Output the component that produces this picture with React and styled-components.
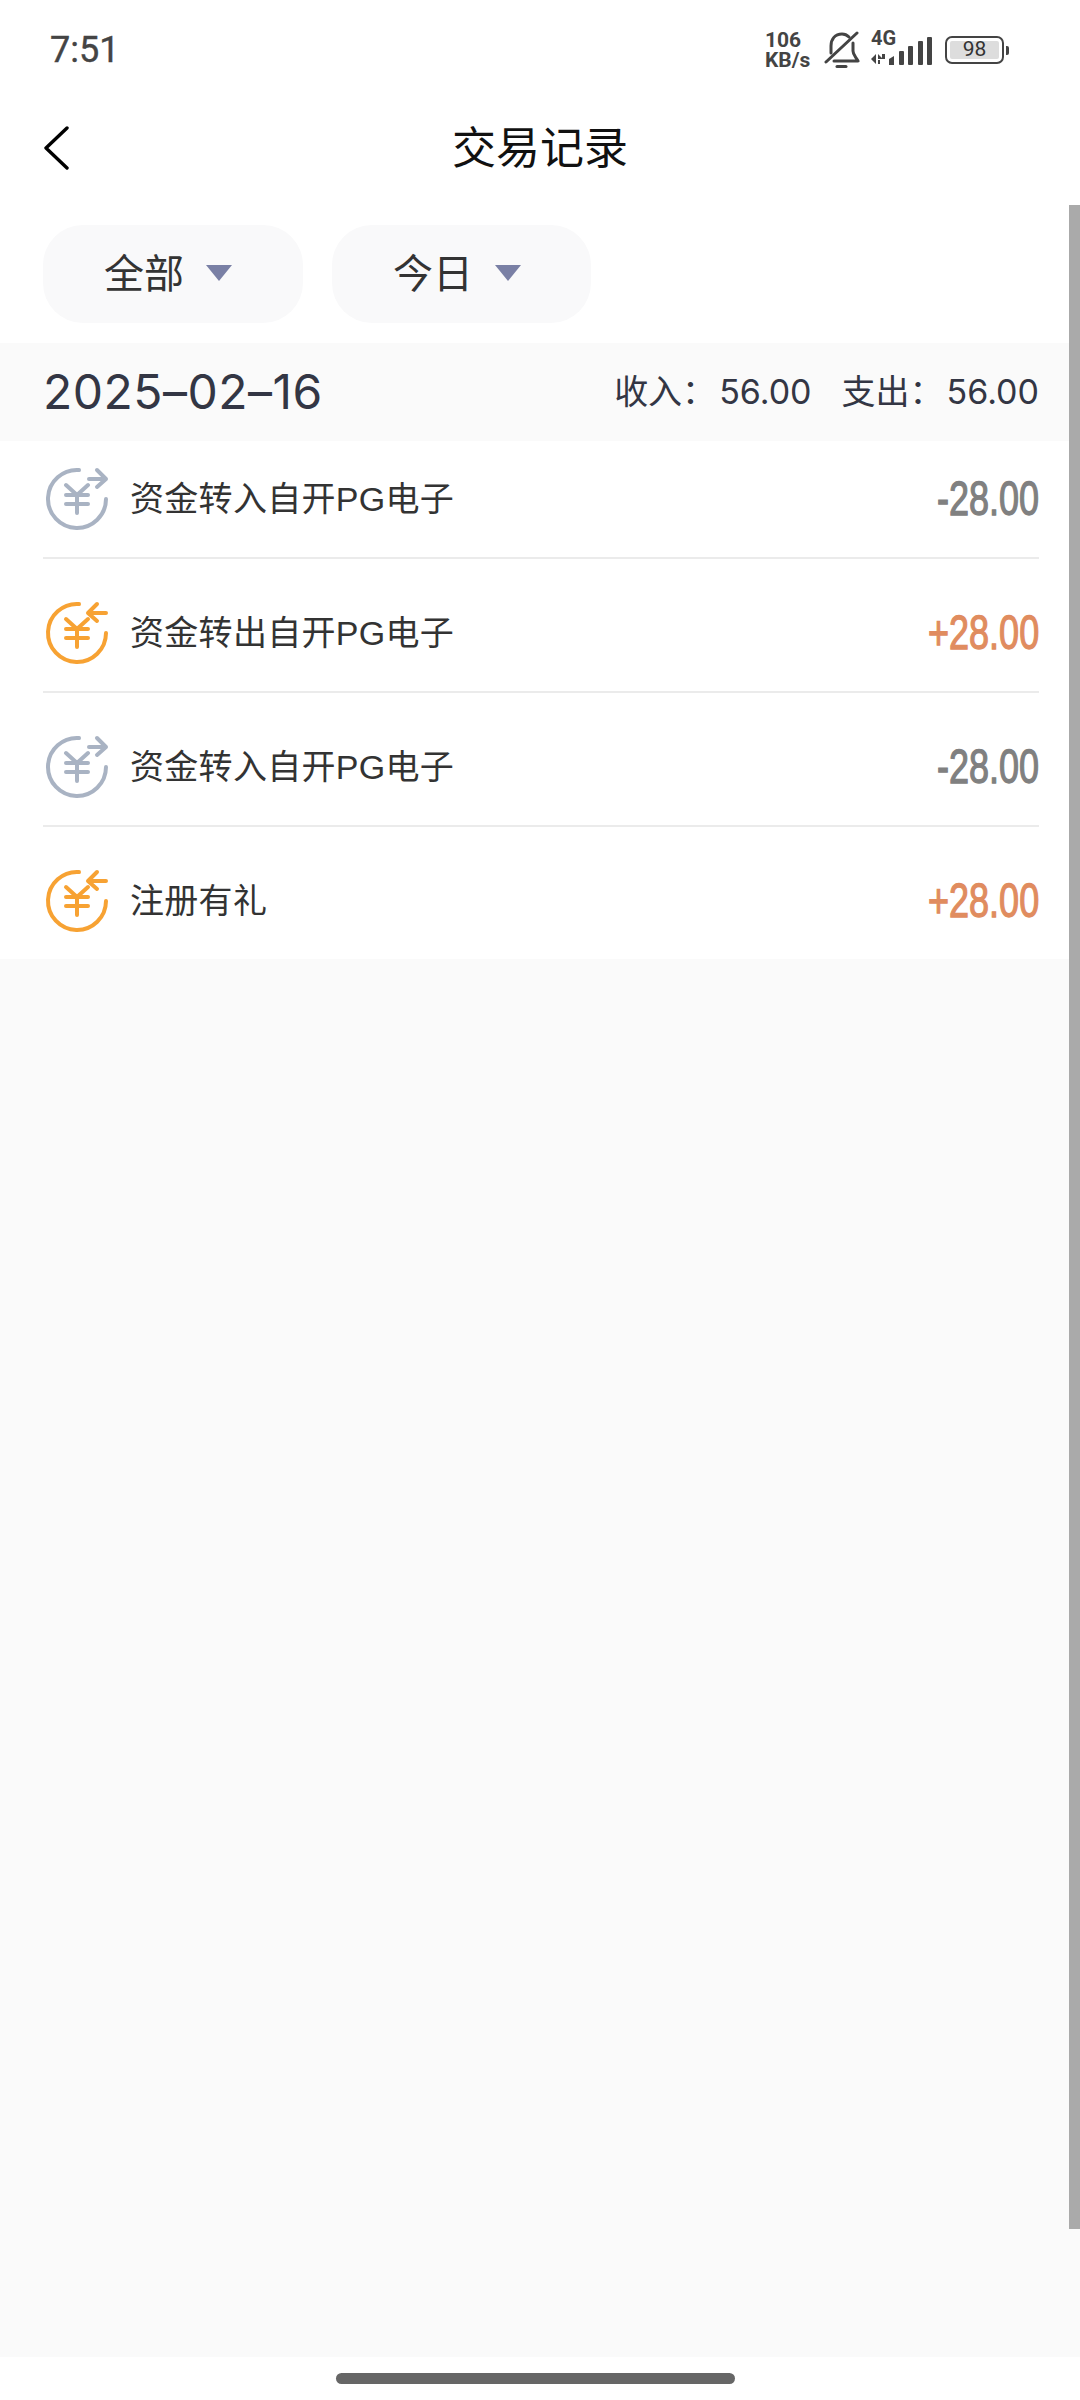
import React from 'react';
import styled, { createGlobalStyle } from 'styled-components';

const cjk = '"Noto Sans CJK SC", sans-serif';

const records = [
  { id: 1, title: '资金转入自开PG电子', amount: '-28.00', income: false },
  { id: 2, title: '资金转出自开PG电子', amount: '+28.00', income: true },
  { id: 3, title: '资金转入自开PG电子', amount: '-28.00', income: false },
  { id: 4, title: '注册有礼', amount: '+28.00', income: true },
];

function MoneyIcon({ income }) {
  return (
    <svg width="64" height="64" viewBox="-32 -32 64 64" fill="none" stroke={income ? '#f7a233' : '#a9b3c3'} strokeWidth="4" strokeLinecap="round" strokeLinejoin="round">
      <path d="M2 -29A29 29 0 1 0 29 0" />
      {income ? <path d="M29 -20H12M20 -29L11 -20L20 -12" /> : <path d="M12 -20H29M20 -29L29 -20L20 -12" />}
      <path d="M-11 -14L0 -4L11 -14M-11 -4H11M-11 5H11M0 -4V14" />
    </svg>
  );
}

function BellOff() {
  return (
    <svg width="36" height="38" viewBox="0 0 36 38" fill="none" stroke="#444" strokeWidth="3" strokeLinecap="round" strokeLinejoin="round">
      <path d="M7 22V15C7 8 11 3 18 3C21 3 23 4 25 6" />
      <path d="M29 12V20C29 24 32 26 34 30H10" />
      <path d="M2 31L33 2" />
      <path d="M13 35.5H22" />
    </svg>
  );
}

function SignalBars() {
  return (
    <svg width="62" height="28" viewBox="0 0 62 28" fill="#444">
      <path d="M0 22L5 17V27ZM7 17L12 22H7ZM7 23H9V27H7ZM11 17H14V22H11Z" />
      <path d="M18 22L23 19V28H18Z" />
      <rect x="28" y="14" width="5" height="14" rx="1" />
      <rect x="37" y="9" width="5" height="19" rx="1" />
      <rect x="47" y="4" width="5" height="24" rx="1" />
      <rect x="56" y="0" width="5" height="28" rx="1" />
    </svg>
  );
}

function App() {
  return (
    <Page>
      <GlobalStyle />
      <StatusBar>
        <Clock>7:51</Clock>
        <StatusIcons>
          <Speed>106<br />KB/s</Speed>
          <BellOff />
          <Network>
            <NetLabel>4G</NetLabel>
            <SignalBars />
          </Network>
          <Battery>
            <BatteryShell><BatteryFill>98</BatteryFill></BatteryShell>
            <BatteryNub />
          </Battery>
        </StatusIcons>
      </StatusBar>

      <NavBar>
        <svg width="26" height="44" viewBox="0 0 26 44" fill="none" stroke="#000" strokeWidth="3.4" strokeLinecap="round" strokeLinejoin="round">
          <path d="M24 2L3 22L24 42" />
        </svg>
        <Title>交易记录</Title>
      </NavBar>

      <Main>
        <Filters>
          <FilterPill $end={71}>全部<Caret /></FilterPill>
          <FilterPill $end={70}>今日<Caret /></FilterPill>
        </Filters>

        <DateBar>
          <DateText>2025–02–16</DateText>
          <Summary>
            <span><SumLabel>收入：</SumLabel>56.00</span>
            <span><SumLabel>支出：</SumLabel>56.00</span>
          </Summary>
        </DateBar>

        <List>
          {records.map((item) => (
            <Row key={item.id}>
              <MoneyIcon income={item.income} />
              <RowTitle>{item.title}</RowTitle>
              <Amount $income={item.income}>{item.amount}</Amount>
            </Row>
          ))}
        </List>
      </Main>

      <Footer>
        <HomeBar />
      </Footer>
      <Scrollbar />
    </Page>
  );
}

const GlobalStyle = createGlobalStyle`
  body {
    margin: 0;
    background: #fff;
    font-family: "Liberation Sans", ${cjk};
  }
`;

const Page = styled.div`
  position: relative;
  width: 1080px;
  height: 2400px;
  display: flex;
  flex-direction: column;
  overflow: hidden;
`;

const StatusBar = styled.div`
  height: 90px;
  padding: 5px 71px 0 50px;
  display: flex;
  align-items: center;
  justify-content: space-between;
`;

const Clock = styled.div`
  font: 400 36px Roboto, sans-serif;
  -webkit-text-stroke: 0.4px #444;
  color: #444;
`;

const StatusIcons = styled.div`
  display: flex;
  align-items: center;
  gap: 11px;
`;

const Speed = styled.div`
  width: 48px;
  font: 700 21px/20px Roboto, sans-serif;
  white-space: nowrap;
  color: #444;
`;

const Network = styled.div`
  width: 62px;
  display: flex;
  flex-direction: column;
  margin-top: -5px;
`;

const NetLabel = styled.div`
  font: 700 20px/15px Roboto, sans-serif;
  color: #444;
  margin-bottom: -9px;
`;

const Battery = styled.div`
  margin-left: 1px;
  display: flex;
  align-items: center;
  gap: 2px;
`;

const BatteryShell = styled.div`
  width: 59px;
  height: 28px;
  box-sizing: border-box;
  border: 2.5px solid #444;
  border-radius: 7px;
  padding: 3px;
  display: flex;
`;

const BatteryFill = styled.div`
  flex: 1;
  background: #ddd;
  border-radius: 2px;
  font: 400 21px/17px Roboto, sans-serif;
  color: #333;
  text-align: center;
`;

const BatteryNub = styled.div`
  width: 3px;
  height: 9px;
  background: #444;
  border-radius: 0 2px 2px 0;
`;

const NavBar = styled.div`
  height: 105px;
  padding-left: 43px;
  display: flex;
  align-items: center;
`;

const Title = styled.div`
  margin: 0 0 5px 383px;
  font: 400 44px/1 ${cjk};
  color: #111;
`;

const Main = styled.div`
  flex: 1;
  background: #fafafa;
`;

const Filters = styled.div`
  background: #fff;
  padding: 25px 0 20px 43px;
  display: flex;
  gap: 29px;
`;

const FilterPill = styled.div`
  height: 98px;
  box-sizing: border-box;
  padding: 0 ${(p) => p.$end}px 7px 61px;
  border-radius: 40px;
  background: #f9f9fa;
  display: flex;
  align-items: center;
  font: 400 40px/1 ${cjk};
  color: #333;
`;

const Caret = styled.span`
  margin: 4px 0 0 22px;
  width: 0;
  height: 0;
  border-left: 13.5px solid transparent;
  border-right: 13.5px solid transparent;
  border-top: 16px solid #7a80a5;
`;

const DateBar = styled.div`
  height: 98px;
  padding: 0 41px 0 43px;
  display: flex;
  align-items: center;
  justify-content: space-between;
  background: #fafafa;
  color: #333644;
`;

const DateText = styled.div`
  font: 400 48px/1 Inter, sans-serif;
  letter-spacing: 0.5px;
`;

const Summary = styled.div`
  display: flex;
  gap: 30px;
  font: 400 34px/1 Inter, ${cjk};
`;

const SumLabel = styled.span`
  margin-right: 3px;
`;

const List = styled.div`
  background: #fff;
  padding: 0 41px 0 43px;
`;

const Row = styled.div`
  height: 116px;
  display: flex;
  align-items: center;
  border-bottom: 2px solid #ebebeb;
  svg {
    margin-left: 2px;
  }
  & + & {
    margin-top: 16px;
  }
  &:last-child {
    border-bottom: 0;
    margin-bottom: 1px;
  }
`;

const RowTitle = styled.div`
  flex: 1;
  margin-left: 21px;
  font: 400 34px/1 "Liberation Sans", ${cjk};
  letter-spacing: 0.3px;
  color: #333;
`;

const Amount = styled.div`
  font: 400 48px/1 "Liberation Sans", sans-serif;
  -webkit-text-stroke: 1.3px currentColor;
  transform: scaleX(0.75);
  transform-origin: right center;
  color: ${(p) => (p.$income ? '#e08c5f' : '#808080')};
`;

const Footer = styled.div`
  height: 43px;
  background: #fff;
  padding-top: 16px;
  box-sizing: border-box;
`;

const HomeBar = styled.div`
  width: 399px;
  height: 11px;
  margin-left: 336px;
  border-radius: 6px;
  background: #666;
`;

const Scrollbar = styled.div`
  position: absolute;
  top: 205px;
  right: 0;
  width: 11px;
  height: 2024px;
  background: #aaa;
`;

export default App;
